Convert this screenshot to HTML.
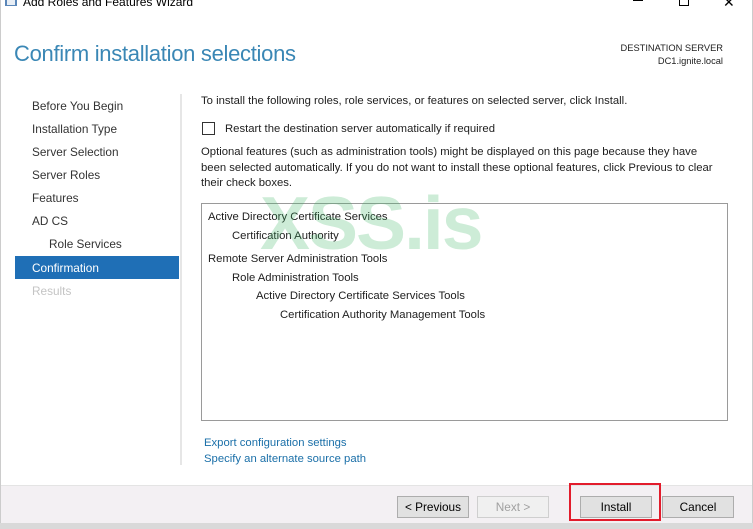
<!DOCTYPE html>
<html><head><meta charset="utf-8"><style>
*{margin:0;padding:0;box-sizing:border-box}
body{width:753px;height:529px;overflow:hidden;background:#fff;font-family:"Liberation Sans",sans-serif;font-size:11.3px;color:#1e1e1e;position:relative}
.a{position:absolute;white-space:nowrap}
.nav{position:absolute;left:32px;color:#333;font-size:11.8px}
.btn{position:absolute;top:496px;height:22px;border:1px solid #adadad;background:#e1e1e1;text-align:center;line-height:20px;font-size:11.8px;color:#000}
</style></head><body>
<svg class="a" style="left:4px;top:-6px" width="14" height="14"><rect x="1" y="2" width="12" height="10" fill="#5a86b8"/><rect x="3" y="6" width="8" height="5" fill="#e8eef5"/></svg>
<div class="a" style="left:23px;top:-5px;font-size:12px;color:#000">Add Roles and Features Wizard</div>
<div class="a" style="left:633px;top:0;width:10px;height:1px;background:#000"></div>
<div class="a" style="left:679px;top:-4px;width:10px;height:10px;border:1px solid #000"></div>
<div class="a" style="left:723px;top:-6px;font-size:14px;color:#000">✕</div>
<div class="a" style="left:752px;top:0;width:1px;height:529px;background:#ccc"></div>
<div class="a" style="left:0;top:0;width:1px;height:529px;background:#ccc"></div>

<div class="a" style="left:14px;top:41px;font-size:22px;color:#3a87b5;letter-spacing:-0.3px">Confirm installation selections</div>
<div class="a" style="right:30px;top:42px;font-size:9.3px;text-align:right;line-height:13px;color:#222">DESTINATION SERVER<br>DC1.ignite.local</div>

<div class="nav" style="top:99px">Before You Begin</div>
<div class="nav" style="top:122px">Installation Type</div>
<div class="nav" style="top:145px">Server Selection</div>
<div class="nav" style="top:168px">Server Roles</div>
<div class="nav" style="top:191px">Features</div>
<div class="nav" style="top:214px">AD CS</div>
<div class="nav" style="top:237px;left:49px">Role Services</div>
<div class="a" style="left:15px;top:256px;width:164px;height:23px;background:#1f6fb6"></div>
<div class="nav" style="top:261px;color:#fff">Confirmation</div>
<div class="nav" style="top:284px;color:#c4c4c4">Results</div>
<div class="a" style="left:180px;top:94px;width:2px;height:371px;background:#e6e6e6"></div>

<div class="a" style="left:201px;top:95px">To install the following roles, role services, or features on selected server, click Install.</div>
<div class="a" style="left:202px;top:122px;width:13px;height:13px;border:1px solid #333;background:#fff"></div>
<div class="a" style="left:225px;top:123px">Restart the destination server automatically if required</div>
<div class="a" style="left:201px;top:145px;line-height:15.5px;white-space:normal;width:515px">Optional features (such as administration tools) might be displayed on this page because they have been selected automatically. If you do not want to install these optional features, click Previous to clear their check boxes.</div>

<div class="a" style="left:201px;top:203px;width:527px;height:218px;border:1px solid #9a9a9a;background:#fff"></div>
<div class="a" style="left:208px;top:211px">Active Directory Certificate Services</div>
<div class="a" style="left:232px;top:230px">Certification Authority</div>
<div class="a" style="left:208px;top:253px">Remote Server Administration Tools</div>
<div class="a" style="left:232px;top:272px">Role Administration Tools</div>
<div class="a" style="left:256px;top:290px">Active Directory Certificate Services Tools</div>
<div class="a" style="left:280px;top:309px">Certification Authority Management Tools</div>

<div class="a" style="left:260px;top:180px;font-size:75px;font-weight:bold;color:rgba(60,180,100,0.26);letter-spacing:-2px">XSS.is</div>

<div class="a" style="left:204px;top:437px;color:#1a6fa8">Export configuration settings</div>
<div class="a" style="left:204px;top:453px;color:#1a6fa8">Specify an alternate source path</div>

<div class="a" style="left:1px;top:485px;width:751px;height:38px;background:#f3f0f3;border-top:1px solid #e4e4e4"></div>
<div class="a" style="left:0;top:523px;width:753px;height:6px;background:#d9d9d9"></div>
<div class="btn" style="left:397px;width:72px">&lt; Previous</div>
<div class="btn" style="left:477px;width:72px;color:#a0a0a0;background:#f0f0f0;border-color:#cfcfcf">Next &gt;</div>
<div class="a" style="left:569px;top:483px;width:92px;height:38px;border:2px solid #e21c2c"></div>
<div class="btn" style="left:580px;width:72px">Install</div>
<div class="btn" style="left:662px;width:72px">Cancel</div>
</body></html>
